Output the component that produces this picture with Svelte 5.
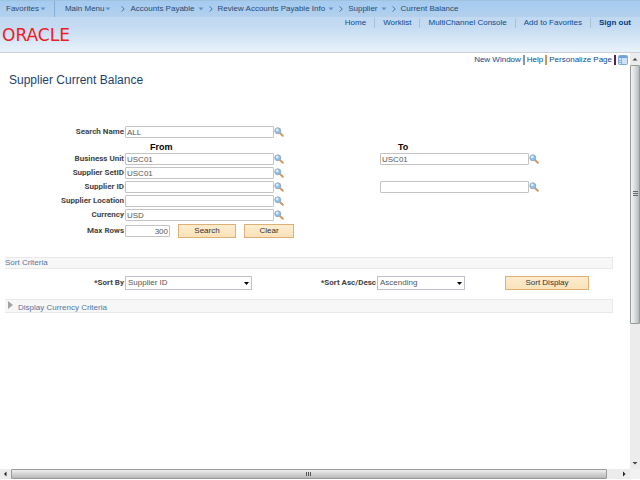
<script lang="ts">
  type Lookup = { id: string; label: string; from: string; to?: string };

  const trail = ['Accounts Payable', 'Review Accounts Payable Info', 'Supplier'];
  const headerLinks = ['Home', 'Worklist', 'MultiChannel Console', 'Add to Favorites'];

  let searchName = $state('ALL');
  let maxRows = $state('300');
  let sortBy = $state('Supplier ID');
  let sortOrder = $state('Ascending');
  let rows: Lookup[] = $state([
    { id: 'unit', label: 'Business Unit', from: 'USC01', to: 'USC01' },
    { id: 'setid', label: 'Supplier SetID', from: 'USC01' },
    { id: 'supplier', label: 'Supplier ID', from: '', to: '' },
    { id: 'location', label: 'Supplier Location', from: '' },
    { id: 'currency', label: 'Currency', from: 'USD' }
  ]);

  function clear() {
    searchName = '';
    maxRows = '';
    for (const row of rows) {
      row.from = '';
      if (row.to !== undefined) row.to = '';
    }
  }
</script>

{#snippet caret()}
  <svg class="caret" width="6" height="4" viewBox="0 0 6 4" aria-hidden="true">
    <path d="M0.5 0.5H5.5L3 3.3Z" fill="#5f92c8" />
  </svg>
{/snippet}

{#snippet chevron()}
  <svg class="chevron" width="4" height="6" viewBox="0 0 4 6" aria-hidden="true">
    <path d="M0.5 0.5L3.3 3L0.5 5.5" fill="none" stroke="#4a7aad" />
  </svg>
{/snippet}

{#snippet lookup(name: string)}
  <button class="lookup" type="button" aria-label="Look up {name}">
    <svg width="10" height="10" viewBox="0 0 10 10" aria-hidden="true">
      <path d="M6.2 6.2L8.8 8.8" stroke="#d39a62" stroke-width="2" stroke-linecap="round" />
      <circle cx="3.8" cy="3.8" r="3" fill="#86c0f0" stroke="#9aa9bb" />
      <circle cx="3.2" cy="3" r="1.4" fill="#d9effc" />
    </svg>
  </button>
{/snippet}

{#snippet selectArrow()}
  <svg class="select-arrow" width="5" height="3" viewBox="0 0 5 3" aria-hidden="true">
    <path d="M0 0H5L2.5 3Z" fill="#000" />
  </svg>
{/snippet}

<div class="app">
  <header class="header">
    <nav class="crumbs" aria-label="Breadcrumb">
      <button class="menu favorites" type="button">Favorites{@render caret()}</button>
      <button class="menu main-menu" type="button">Main Menu{@render caret()}</button>
      {#each trail as item}
        {@render chevron()}
        <button class="menu" type="button">{item}{@render caret()}</button>
      {/each}
      {@render chevron()}
      <a href="#current">Current Balance</a>
    </nav>
    <div class="brand-row">
      <span class="logo">ORACLE</span>
      <nav class="links" aria-label="Header">
        {#each headerLinks as link}
          <a href="#top">{link}</a>
        {/each}
        <a class="sign-out" href="#signout">Sign out</a>
      </nav>
    </div>
  </header>

  <div class="frame">
    <main class="content">
      <div class="page-links">
        <a href="#new">New Window</a>
        <a class="help" href="#help">Help</a>
        <a class="personalize" href="#personalize">Personalize Page</a>
        <button class="grid-button" type="button" aria-label="Page layout">
          <svg width="10" height="10" viewBox="0 0 10 10" aria-hidden="true">
            <rect x="0.5" y="0.5" width="9" height="9" rx="1" fill="#cfe2f7" stroke="#7ea9dc" />
            <path d="M1 2H9" stroke="#6fa3e0" stroke-width="2" />
            <path d="M3.5 3V9M1 5.5H3.5M1 7.5H3.5" stroke="#8bb4e6" />
          </svg>
        </button>
      </div>

      <h1>Supplier Current Balance</h1>

      <form class="search" onsubmit={(e) => e.preventDefault()}>
        <div class="row first">
          <label for="search-name">Search Name</label>
          <input id="search-name" type="text" bind:value={searchName} />
          {@render lookup('Search Name')}
        </div>
        <div class="row heads">
          <span></span>
          <strong>From</strong>
          <span></span>
          <strong class="to-head">To</strong>
        </div>
        {#each rows as row (row.id)}
          <div class="row">
            <label for={row.id}>{row.label}</label>
            <input id={row.id} type="text" bind:value={row.from} />
            {@render lookup(row.label)}
            {#if row.to !== undefined}
              <input type="text" aria-label="{row.label} to" bind:value={row.to} />
              {@render lookup(`${row.label} to`)}
            {/if}
          </div>
        {/each}
        <div class="actions">
          <label for="max-rows">Max Rows</label>
          <input id="max-rows" type="text" bind:value={maxRows} />
          <button class="action" type="submit">Search</button>
          <button class="action" type="button" onclick={clear}>Clear</button>
        </div>
      </form>

      <section>
        <h2 class="bar">Sort Criteria</h2>
        <div class="sort">
          <label for="sort-by">*Sort By</label>
          <span class="select">
            <select id="sort-by" bind:value={sortBy}>
              <option>Supplier ID</option>
              <option>Business Unit</option>
              <option>Currency</option>
            </select>
            {@render selectArrow()}
          </span>
          <label for="sort-order">*Sort Asc/Desc</label>
          <span class="select">
            <select id="sort-order" bind:value={sortOrder}>
              <option>Ascending</option>
              <option>Descending</option>
            </select>
            {@render selectArrow()}
          </span>
          <button class="action" type="button">Sort Display</button>
        </div>
      </section>

      <button class="bar expander" type="button" aria-expanded="false">
        <svg width="5" height="8" viewBox="0 0 5 8" aria-hidden="true">
          <path d="M0 0L5 4L0 8Z" fill="#a3a3a3" />
        </svg>
        <span>Display Currency Criteria</span>
      </button>
    </main>

    <div class="scroll-y" aria-hidden="true">
      <svg width="10" height="12" viewBox="0 0 10 12"><path d="M2.5 7.5L5 5L7.5 7.5Z" fill="#444" /></svg>
      <div class="track-y">
        <div class="thumb-y">
          <svg width="5" height="6" viewBox="0 0 5 6"><path d="M0 0.5H5M0 2.5H5M0 4.5H5" stroke="#666" /></svg>
        </div>
      </div>
      <svg width="10" height="12" viewBox="0 0 10 12"><path d="M2.5 5L5 7.5L7.5 5Z" fill="#444" /></svg>
    </div>
  </div>

  <div class="scroll-x" aria-hidden="true">
    <svg width="11" height="10" viewBox="0 0 11 10"><path d="M6.5 2.5L4 5L6.5 7.5Z" fill="#222" /></svg>
    <div class="track-x">
      <div class="thumb-x">
        <svg width="6" height="4" viewBox="0 0 6 4"><path d="M0.5 0V4M2.5 0V4M4.5 0V4" stroke="#555" /></svg>
      </div>
    </div>
    <svg width="11" height="10" viewBox="0 0 11 10"><path d="M4 2.5L6.5 5L4 7.5Z" fill="#222" /></svg>
    <div class="corner"></div>
  </div>
</div>

<style>
  :global(body) {
    margin: 0;
    background: #fff;
  }

  .app {
    box-sizing: border-box;
    display: flex;
    flex-direction: column;
    min-height: 100vh;
    padding-bottom: 1px;
    font: 8px/10px 'Liberation Sans', Arial, sans-serif;
    color: #444;
    background: #fff;
  }

  button,
  input,
  select {
    box-sizing: border-box;
    margin: 0;
    padding: 0;
    font: inherit;
    color: inherit;
    border: 0;
    background: none;
  }

  button {
    cursor: pointer;
  }

  svg {
    display: block;
    flex: none;
  }

  a {
    color: #0b4a90;
    text-decoration: none;
  }

  .header {
    background: linear-gradient(#bdd7f0, #c3daf1 50%, #e9f2fa);
    border-bottom: 1px solid #cdd0da;
  }

  .crumbs {
    display: flex;
    align-items: center;
    gap: 5px;
    height: 16px;
    border-top: 1px solid #9fc3dc;
    background: linear-gradient(#a5cbf1, #b3d0ec);
    white-space: nowrap;
  }

  .crumbs a,
  .menu {
    color: #2a4a72;
  }

  .menu {
    display: flex;
    align-items: center;
    gap: 3px;
  }

  .favorites {
    height: 16px;
    gap: 1px;
    padding: 0 8px 0 6px;
    border-right: 1px solid #86add5;
  }

  .main-menu {
    gap: 1px;
    padding: 0 5px;
  }

  .brand-row {
    display: flex;
    justify-content: space-between;
    align-items: flex-start;
    height: 35px;
  }

  .logo {
    padding: 8px 0 0 2px;
    font: 17px/20px 'DejaVu Sans', sans-serif;
    color: #ee1c24;
  }

  .links {
    display: flex;
    padding: 1px 9px 0 0;
  }

  .links a {
    padding: 0 8px;
    border-right: 1px solid #a9bfd8;
  }

  .links .sign-out {
    padding-right: 0;
    border: 0;
    font-weight: bold;
    color: #003b85;
  }

  .frame {
    flex: 1;
    display: flex;
  }

  .content {
    flex: 1;
    min-width: 0;
    padding: 2px 17px 20px 5px;
  }

  .page-links {
    display: flex;
    justify-content: flex-end;
    align-items: center;
    margin-right: -15px;
  }

  .page-links a {
    padding: 0 2px;
    border-right: 2px solid #8297b5;
  }

  .page-links .help {
    border-color: #c79a55;
  }

  .page-links .personalize {
    border-color: #611d4d;
  }

  .grid-button {
    margin-left: 2px;
  }

  h1 {
    margin: 8px 4px 39px;
    font-size: 12px;
    line-height: 14px;
    font-weight: normal;
    color: #1c3f70;
  }

  .row {
    display: grid;
    grid-template-columns: 120px 149px 106px 149px 12px;
    height: 12px;
    margin-bottom: 2px;
    line-height: 12px;
  }

  .first {
    margin-bottom: 4px;
  }

  .row label,
  .actions label,
  .sort label {
    padding-right: 1px;
    font-family: Roboto, 'Liberation Sans', sans-serif;
    font-weight: bold;
    text-align: right;
  }

  .heads {
    height: 10px;
    margin-bottom: 1px;
    font-size: 9px;
    line-height: 10px;
    color: #000;
  }

  .heads strong {
    padding-left: 25px;
  }

  .heads .to-head {
    padding-left: 18px;
  }

  input {
    height: 12px;
    padding: 1px 1px 0;
    border: 1px solid #c4c4c4;
    border-radius: 1px;
    background: #fff;
    color: #555;
  }

  .lookup {
    justify-self: start;
    padding: 1px 0;
  }

  .actions {
    display: flex;
    align-items: center;
    margin-top: 3px;
    line-height: 12px;
  }

  .actions label {
    box-sizing: border-box;
    width: 120px;
  }

  .actions input {
    width: 45px;
    text-align: right;
  }

  .action {
    height: 14px;
    border: 1px solid #dcb077;
    background: linear-gradient(#fdecce, #f9e2b9);
    color: #333;
  }

  .actions .action {
    width: 58px;
    margin-left: 8px;
  }

  .actions .action:last-child {
    width: 50px;
  }

  .bar {
    box-sizing: border-box;
    width: 100%;
    height: 12px;
    margin: 19px 0 7px;
    border: 1px solid #e9e9e9;
    border-left: 0;
    background: #f7f7f7;
    font-size: 8px;
    line-height: 10px;
    font-weight: normal;
    color: #5475a0;
  }

  .sort {
    display: flex;
    align-items: center;
  }

  .sort label {
    flex: 0 0 119px;
  }

  .sort .select + label {
    flex-basis: 124px;
  }

  .select {
    position: relative;
    flex: 0 0 127px;
  }

  label + .select:nth-of-type(2) {
    flex-basis: 88px;
  }

  select {
    display: block;
    width: 100%;
    height: 14px;
    padding: 0 2px;
    border: 1px solid #c3c0cc;
    appearance: none;
    background: #fff;
    color: #555;
  }

  .select-arrow {
    position: absolute;
    top: 6px;
    right: 3px;
    pointer-events: none;
  }

  .sort .action {
    width: 84px;
    margin-left: 40px;
  }

  .expander {
    display: flex;
    gap: 5px;
    height: 14px;
    margin: 9px 0 0;
    padding: 1px 3px 0;
    text-align: left;
  }

  .expander span {
    padding-top: 2px;
  }

  .scroll-y {
    display: flex;
    flex-direction: column;
    width: 10px;
    background: #ececec;
  }

  .track-y {
    flex: 1;
  }

  .thumb-y {
    box-sizing: border-box;
    display: flex;
    align-items: center;
    justify-content: center;
    height: 66%;
    border: 1px solid #999;
    border-radius: 1px;
    background: linear-gradient(to right, #f3f5f6, #dfe3e6 40%, #b5babd);
  }

  .scroll-x {
    display: flex;
    height: 10px;
    background: #ececec;
  }

  .track-x {
    flex: 1;
  }

  .thumb-x {
    box-sizing: border-box;
    display: flex;
    align-items: center;
    justify-content: center;
    width: 98%;
    height: 10px;
    border: 1px solid #999;
    border-radius: 1px;
    background: linear-gradient(#f0f0f0, #d8d8d8 40%, #b8b8b8);
  }

  .corner {
    width: 10px;
    background: #f2f2f2;
  }
</style>
